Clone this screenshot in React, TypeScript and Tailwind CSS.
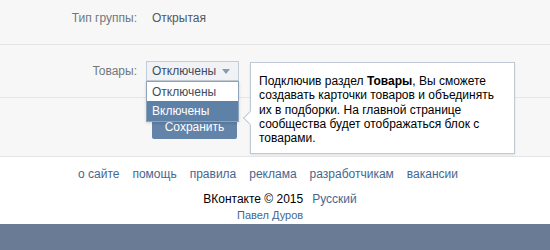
import React from 'react';

const links = ['о сайте', 'помощь', 'правила', 'реклама', 'разработчикам', 'вакансии'];

const App: React.FC = () => {
  return (
    <div className="relative w-[550px] h-[250px] overflow-hidden flex flex-col bg-white text-[12px] font-['Liberation_Sans',Arial,sans-serif]">
      {/* settings block */}
      <div className="h-[157px] flex flex-col bg-[#f7f7f7] border-b border-[#e3e5e8]">
        <div className="h-[45px] flex items-start pt-[11px] border-b border-[#e3e5e8]">
          <div className="w-[137px] text-right text-[#707980] leading-[15px]">Тип группы:</div>
          <div className="ml-[15px] text-[#4b5a69] leading-[15px]">Открытая</div>
        </div>

        <div className="h-[53px] flex items-start pt-[16px] border-b border-[#e3e5e8]">
          <div className="w-[137px] text-right text-[#707980] leading-[20px]">Товары:</div>
          <div className="relative ml-[9px]">
            <div className="w-[93px] h-[20px] flex items-center justify-between pl-[5px] pr-[8px] bg-[#f0f2f5] border border-[#c3cdd8] text-[#3d4d5e]">
              <span>Отключены</span>
              <svg width="8" height="5" viewBox="0 0 8 5"><path d="M0 0h8L4 5z" fill="#8c9aab" /></svg>
            </div>
            <div className="absolute left-0 top-[20px] z-10 w-[93px] bg-white border border-[#8ea3ba] shadow-[0_1px_3px_rgba(0,0,0,0.15)]">
              <div className="h-[19px] flex items-center pl-[5px] text-[#3d4d5e]">Отключены</div>
              <div className="h-[20px] flex items-center pl-[5px] bg-[#5e81a8] text-white">Включены</div>
            </div>
          </div>
        </div>

        <div className="flex pt-[17px] pl-[152px]">
          <button className="w-[85px] h-[24px] rounded-[2px] bg-[#6383a8] text-white text-[12px] leading-[24px]">Сохранить</button>
        </div>
      </div>

      {/* tooltip */}
      <div className="absolute left-[250px] top-[62px] z-20 w-[265px] h-[92px] bg-white border border-[#c0cad5] shadow-[0_1px_2px_rgba(0,0,0,0.1)] pl-[8px] pr-[8px] pt-[11px] text-black leading-[14.3px]">
        <div className="absolute -left-[6px] top-[50px] w-[10px] h-[10px] bg-white border-l border-b border-[#c0cad5] rotate-45" />
        Подключив раздел <b>Товары</b>, Вы сможете создавать карточки товаров и объединять их в подборки. На главной странице сообщества будет отображаться блок с товарами.
      </div>

      {/* footer */}
      <div className="h-[67px] flex flex-col">
        <div className="flex gap-[13px] pl-[78px] pt-[10px] text-[#45678f] leading-[15px]">
          {links.map((l) => (
            <span key={l}>{l}</span>
          ))}
        </div>
        <div className="flex justify-center pl-[10px] gap-[9px] mt-[10px] leading-[15px]">
          <span className="text-black">ВКонтакте © 2015</span>
          <span className="text-[#45678f]">Русский</span>
        </div>
        <div className="flex pl-[237px] mt-[2px] text-[11px] text-[#45678f] leading-[13px]">Павел Дуров</div>
      </div>
      <div className="flex-1 bg-[#6a7b95]" />
    </div>
  );
};

export default App;
